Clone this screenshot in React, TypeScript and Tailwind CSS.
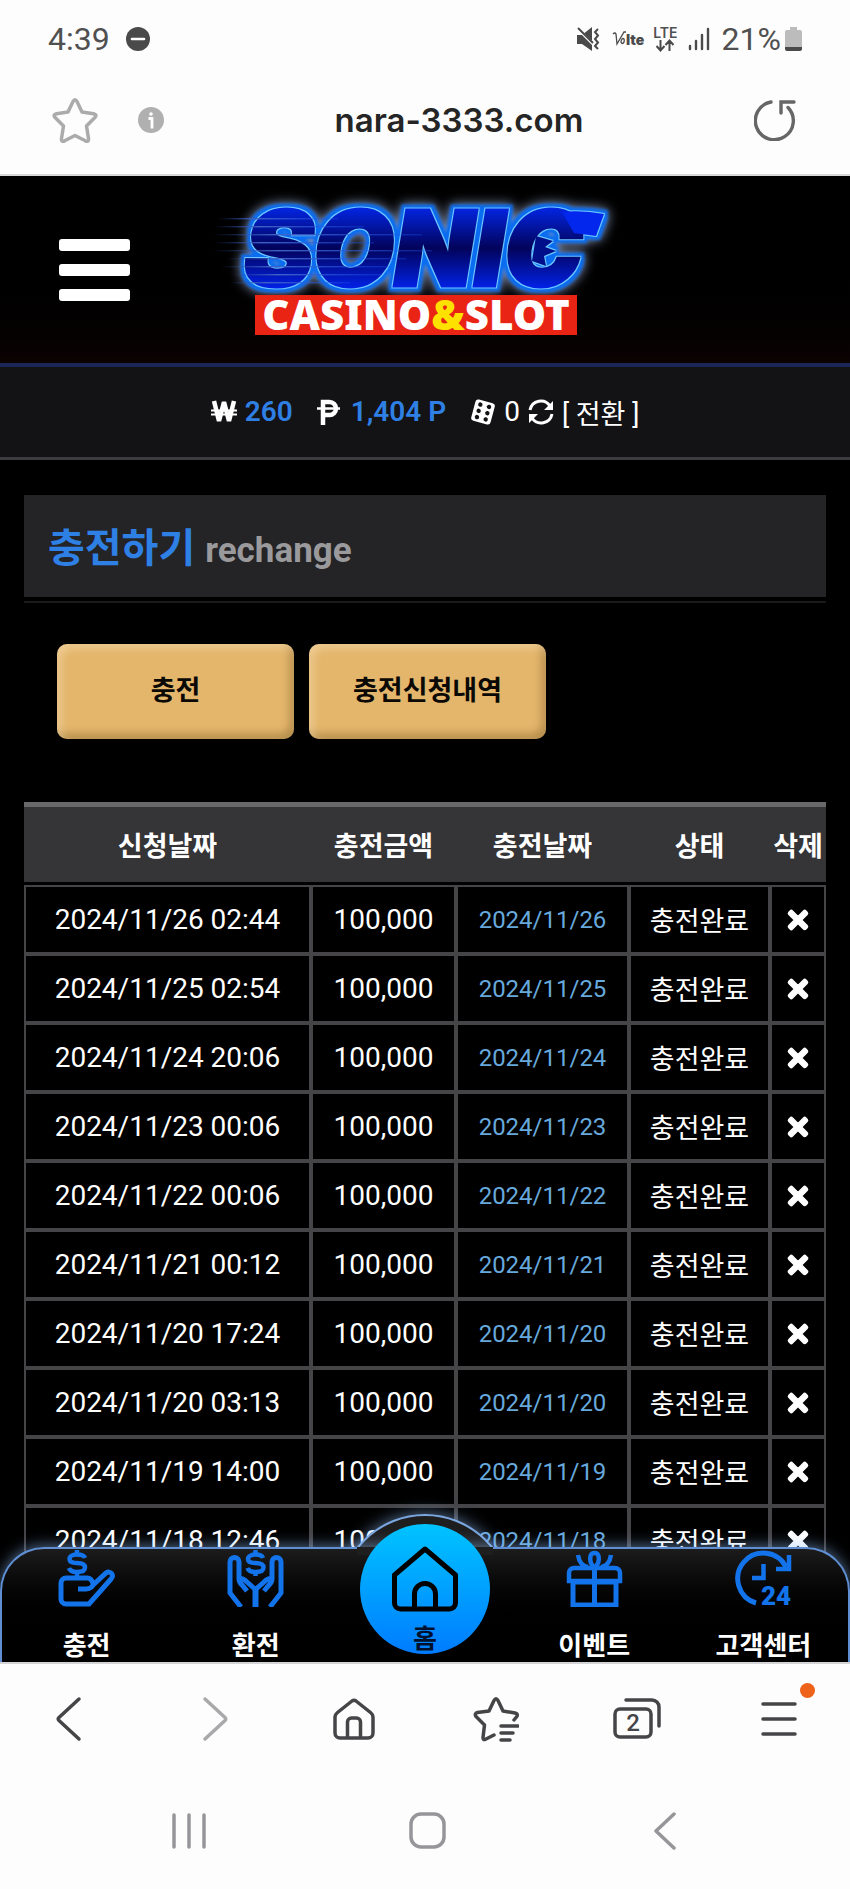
import type { ReactNode } from 'react';
import { FaTimes } from 'react-icons/fa';

interface Deposit {
  requestedAt: string;
  amount: string;
  paidOn: string;
}

const DEPOSITS: Deposit[] = [
  { requestedAt: '2024/11/26 02:44', amount: '100,000', paidOn: '2024/11/26' },
  { requestedAt: '2024/11/25 02:54', amount: '100,000', paidOn: '2024/11/25' },
  { requestedAt: '2024/11/24 20:06', amount: '100,000', paidOn: '2024/11/24' },
  { requestedAt: '2024/11/23 00:06', amount: '100,000', paidOn: '2024/11/23' },
  { requestedAt: '2024/11/22 00:06', amount: '100,000', paidOn: '2024/11/22' },
  { requestedAt: '2024/11/21 00:12', amount: '100,000', paidOn: '2024/11/21' },
  { requestedAt: '2024/11/20 17:24', amount: '100,000', paidOn: '2024/11/20' },
  { requestedAt: '2024/11/20 03:13', amount: '100,000', paidOn: '2024/11/20' },
  { requestedAt: '2024/11/19 14:00', amount: '100,000', paidOn: '2024/11/19' },
  { requestedAt: '2024/11/18 12:46', amount: '100,000', paidOn: '2024/11/18' },
];

const COLUMNS = [
  { label: '신청날짜', width: 'w-[287px]' },
  { label: '충전금액', width: 'w-[145px]' },
  { label: '충전날짜', width: 'w-[173px]' },
  { label: '상태', width: 'w-[141px]' },
  { label: '삭제', width: 'w-[56px]' },
];

function StatusBar() {
  return (
    <div className="flex h-[78px] shrink-0 items-center justify-between px-12 text-[32px] leading-none text-[#505050]">
      <div className="flex items-center gap-4">
        <span>4:39</span>
        <svg width="24" height="24" viewBox="0 0 24 24" aria-hidden="true">
          <circle cx="12" cy="12" r="12" fill="#4a4a4a" />
          <path d="M6 12h12" stroke="#fff" strokeWidth="2.6" strokeLinecap="round" />
        </svg>
      </div>
      <div className="flex items-center">
        <svg width="24" height="24" viewBox="0 0 24 24" className="mr-3" aria-hidden="true">
          <path d="M1 8h5l10-8v24L6 17H1z" fill="#4a4a4a" />
          <path d="M-1 -1l20 20" stroke="#fff" strokeWidth="3" />
          <path d="M2 1l15 15" stroke="#4a4a4a" strokeWidth="2" />
          <path d="M22 2l-3 3 3 3.500-3 3.500 3 3.500-3 3.500 3 3" fill="none" stroke="#4a4a4a" strokeWidth="2" />
        </svg>
        <svg width="33" height="18" viewBox="0 0 33 18" className="mr-2" fill="#4a4a4a" aria-hidden="true">
          <path d="M1 4q2-2 3 0l1 10L12 2h2M10 9q-2 3 0 4.500 3-.500 2-4.500-1-1-2 0z" fill="none" stroke="#4a4a4a" strokeWidth="1.300" />
          <text x="14" y="15" fontFamily="Inter, sans-serif" fontWeight="900" fontSize="14">lte</text>
        </svg>
        <div className="mr-[10px] flex flex-col items-center">
          <span className="font-[Inter,sans-serif] text-[14px] leading-[13px] font-semibold">LTE</span>
          <svg width="18" height="13" viewBox="0 0 18 13" fill="none" stroke="#4a4a4a" strokeWidth="2" aria-hidden="true">
            <path d="M4.500 1v10M.5 7l4 4.500L8.500 7M13.500 12V2M9.500 6l4-4.500L17.500 6" />
          </svg>
        </div>
        <svg width="22" height="24" viewBox="0 0 22 24" className="mr-3" fill="none" stroke="#4a4a4a" strokeWidth="2.400" strokeLinecap="round" aria-hidden="true">
          <path d="M2 19v3M8 14v8M14 8v14M20 2v20" />
        </svg>
        <span>21%</span>
        <svg width="17" height="24" viewBox="0 0 17 24" className="ml-1" aria-hidden="true">
          <path d="M5 0h7v3h3a2 2 0 0 1 2 2v16H0V5a2 2 0 0 1 2-2h3z" fill="#bcbcbc" />
          <path d="M0 20h17v2a2 2 0 0 1-2 2H2a2 2 0 0 1-2-2z" fill="#4a4a4a" />
        </svg>
      </div>
    </div>
  );
}

function AddressBar() {
  return (
    <div className="flex h-[98px] shrink-0 items-center border-b-2 border-[#d8dad9] pb-3 pl-[52px] pr-[54px]">
      <button type="button" aria-label="Add bookmark">
        <svg width="46" height="46" viewBox="0 0 46 46" fill="none" stroke="#ababab" strokeWidth="3.500" strokeLinejoin="round" aria-hidden="true">
          <path d="M21 4.500q2-3.500 4 0l5 10.500 11.500 1.700q4 .8 1.400 3.800L34.500 29l2 12.500q.4 4-3.200 2.300L23 38.500l-10.300 5.300q-3.600 1.700-3.200-2.300l2-12.500-8.400-8.500q-2.600-3 1.400-3.800L16 15z" />
        </svg>
      </button>
      <svg width="26" height="26" viewBox="0 0 26 26" className="ml-[40px]" aria-hidden="true">
        <circle cx="13" cy="13" r="13" fill="#b0b0b0" />
        <circle cx="13" cy="7" r="1.800" fill="#fff" />
        <path d="M10.500 11.500H14v10" fill="none" stroke="#fff" strokeWidth="2.800" />
      </svg>
      <span className="flex-1 text-center font-[Inter,sans-serif] text-[33px] leading-none font-semibold text-[#252525]">
        nara-3333.com
      </span>
      <button type="button" aria-label="Reload">
        <svg width="42" height="42" viewBox="0 0 42 42" fill="none" stroke="#666" strokeWidth="3.400" strokeLinecap="round" aria-hidden="true">
          <path d="M17 3A19 19 0 1 0 34 8.500" />
          <path d="M27 14V3h13" />
        </svg>
      </button>
    </div>
  );
}

function Logo() {
  return (
    <svg width="430" height="187" viewBox="0 0 430 187" role="img" aria-label="Sonic Casino & Slot">
      <defs>
        <linearGradient id="sonicFill" x1="0" y1="0" x2="0" y2="1">
          <stop offset=".15" stopColor="#0328f0" />
          <stop offset=".5" stopColor="#02035a" />
          <stop offset=".85" stopColor="#0224f4" />
        </linearGradient>
        <linearGradient id="speed" x1="0" y1="0" x2="1" y2="0">
          <stop offset="0" stopColor="#27479c" stopOpacity="0" />
          <stop offset=".3" stopColor="#3f62c4" />
          <stop offset="1" stopColor="#1d55f0" stopOpacity=".3" />
        </linearGradient>
        {/* light outline, solid blue halo, then a soft pale glow */}
        <filter id="neon" x="-10%" y="-30%" width="120%" height="160%" colorInterpolationFilters="sRGB">
          <feMorphology in="SourceAlpha" operator="dilate" radius="1" result="edge" />
          <feFlood floodColor="#6cc8ff" />
          <feComposite in2="edge" operator="in" result="outline" />
          <feMorphology in="SourceAlpha" operator="dilate" radius="4" />
          <feGaussianBlur stdDeviation="1.5" result="wide" />
          <feFlood floodColor="#0a6cf0" />
          <feComposite in2="wide" operator="in" result="halo" />
          <feGaussianBlur in="wide" stdDeviation="6" result="soft" />
          <feFlood floodColor="#8f9fc4" />
          <feComposite in2="soft" operator="in" result="glow" />
          <feMerge>
            <feMergeNode in="glow" />
            <feMergeNode in="halo" />
            <feMergeNode in="outline" />
            <feMergeNode in="SourceGraphic" />
          </feMerge>
        </filter>
      </defs>
      <g filter="url(#neon)">
        <text
          x="34"
          y="110"
          fontFamily="Inter, sans-serif"
          fontWeight="900"
          fontStyle="italic"
          fontSize="104"
          fill="url(#sonicFill)"
          stroke="url(#sonicFill)"
          strokeWidth="3"
        >
          SONIC
        </text>
        {/* quills */}
        <path d="M326 60l17 5-8 6 11 4-12 5 2 10-14-5z" fill="#020f8a" />
        <path d="M352 36q20-2 42 2l-8 22-22-3z" fill="#0327ec" />
      </g>
      <g fill="url(#speed)">
        <rect x="8" y="42" width="120" height="1.400" />
        <rect x="4" y="50" width="150" height="1.400" />
        <rect x="2" y="58" width="210" height="1.400" />
        <rect x="4" y="66" width="160" height="1.400" />
        <rect x="2" y="74" width="220" height="1.400" />
        <rect x="16" y="82" width="180" height="1.400" />
        <rect x="10" y="90" width="170" height="1.400" />
        <rect x="22" y="98" width="150" height="1.400" />
        <rect x="20" y="106" width="120" height="1.400" />
      </g>
      <rect x="45" y="119" width="322" height="40" fill="#ea2415" />
      <text x="206" y="154" textAnchor="middle" fontFamily="Noto Sans, sans-serif" fontWeight="900" fontSize="42" fill="#fff">
        CASINO<tspan fill="#ffe100">&amp;</tspan>SLOT
      </text>
    </svg>
  );
}

function SiteHeader() {
  return (
    <header className="grid grid-cols-[1fr_auto_1fr] items-center border-b-4 border-[#1a2558] bg-linear-to-b from-black from-40% to-[#0c0202]">
      <button type="button" aria-label="메뉴" className="ml-[59px] flex w-[71px] flex-col gap-[13px]">
        <span className="h-3 w-full rounded-[3px] bg-white" />
        <span className="h-3 w-full rounded-[3px] bg-white" />
        <span className="h-3 w-full rounded-[3px] bg-white" />
      </button>
      <Logo />
    </header>
  );
}

function BalanceBar() {
  return (
    <div className="flex h-[93px] items-center justify-center border-b-[3px] border-[#3c3b3d] bg-[#131215] text-[28px] leading-none text-white">
      <svg width="26" height="24" viewBox="0 0 26 24" className="mr-2" fill="none" stroke="#fff" role="img" aria-label="원">
        <path d="M3 1l5 20 5-19 5 19 5-20" strokeWidth="4.500" strokeLinejoin="bevel" />
        <path d="M0 10.500h26M0 14.500h26" strokeWidth="2" />
      </svg>
      <span className="mr-6 font-semibold text-[#2f80e4]">260</span>
      <svg width="24" height="26" viewBox="0 0 24 26" className="mr-[10px]" fill="none" stroke="#fff" aria-hidden="true">
        <path d="M6 26V3h6.500a6.500 6.500 0 0 1 0 13H6" strokeWidth="4.500" />
        <path d="M0 9.500h23" strokeWidth="2.500" />
      </svg>
      <span className="mr-6 font-semibold text-[#2f80e4]">1,404 P</span>
      <svg width="26" height="26" viewBox="0 0 26 26" className="mr-2" aria-hidden="true">
        <g transform="rotate(15 13 13)">
          <rect x="3" y="2" width="20" height="22" rx="3" fill="#fff" />
          <g fill="#131215">
            <circle cx="8.500" cy="6.500" r="2.200" />
            <circle cx="17.500" cy="6.500" r="2.200" />
            <circle cx="8.500" cy="13" r="2.200" />
            <circle cx="17.500" cy="13" r="2.200" />
            <circle cx="8.500" cy="19.500" r="2.200" />
            <circle cx="17.500" cy="19.500" r="2.200" />
          </g>
        </g>
      </svg>
      <span className="mr-2">0</span>
      <a href="#convert" className="flex items-center gap-2">
        <svg width="26" height="26" viewBox="0 0 26 26" fill="none" stroke="#fff" strokeWidth="3" aria-hidden="true">
          <path d="M2 11A11 11 0 0 1 22 7M24 15A11 11 0 0 1 4 19" />
          <path d="M25 2v9h-9zM1 24v-9h9z" fill="#fff" stroke="none" />
        </svg>
        <span className="pt-[6px] text-[27px]">[ 전환 ]</span>
      </a>
    </div>
  );
}

function PageTitle() {
  return (
    <div className="border-b-2 border-[#1b1b1c] pb-1">
      <h1 className="flex h-[102px] items-baseline gap-[10px] bg-[#242325] px-6 pt-[30px] font-bold">
        <span className="text-[40px] leading-[48px] text-[#2f80e4]">충전하기</span>
        <span className="text-[35px] leading-[48px] text-[#9a999c]">rechange</span>
      </h1>
    </div>
  );
}

function GoldButton({ children }: { children: ReactNode }) {
  return (
    <button
      type="button"
      className="h-[95px] w-[237px] rounded-[10px] bg-[#e4b66c] text-[27px] font-bold text-[#0b0905] shadow-[inset_4px_4px_8px_rgba(255,235,200,0.45),inset_-4px_-5px_8px_rgba(90,60,10,0.35)]"
    >
      {children}
    </button>
  );
}

function DepositTable() {
  return (
    <table className="w-full table-fixed border-separate border-spacing-0 text-center text-white">
      <thead>
        <tr className="h-20">
          {COLUMNS.map((column) => (
            <th
              key={column.label}
              className={`${column.width} border-t-[5px] border-[#68676a] bg-[#353436] pt-[6px] text-[27px] leading-none font-bold whitespace-nowrap`}
            >
              {column.label}
            </th>
          ))}
        </tr>
        <tr aria-hidden="true" className="h-[3px]" />
      </thead>
      <tbody className="[&_td]:border-2 [&_td]:border-[#454447]">
        {DEPOSITS.map((deposit) => (
          <tr key={deposit.requestedAt} className="h-[69px] leading-none">
            <td className="text-[28px]">{deposit.requestedAt}</td>
            <td className="text-[28px]">{deposit.amount}</td>
            <td className="text-[24px] text-[#67a9dc]">{deposit.paidOn}</td>
            <td className="pt-[6px] text-[27px]">충전완료</td>
            <td>
              <button type="button" aria-label="삭제" className="block w-full">
                <FaTimes className="mx-auto size-7" stroke="currentColor" strokeWidth="24" />
              </button>
            </td>
          </tr>
        ))}
      </tbody>
    </table>
  );
}

function NavItem({ label, children }: { label: string; children: ReactNode }) {
  return (
    <a href="#" className="flex flex-col items-center gap-[25px] pt-px">
      <svg width="57" height="57" viewBox="0 0 57 57" fill="none" stroke="#1273ea" strokeWidth="5" aria-hidden="true">
        {children}
      </svg>
      <span className="text-[26px] leading-[28px] font-bold whitespace-nowrap text-white">{label}</span>
    </a>
  );
}

function SiteNav() {
  return (
    <nav className="absolute inset-x-0 bottom-0">
      {/* hump behind the home button */}
      <div className="absolute -top-[33px] left-1/2 size-[173px] -translate-x-1/2 rounded-full border-2 border-[#7aa7e0] bg-[#1e1e1f] shadow-[0_0_16px_rgba(150,195,255,0.6)]" />
      <div className="relative grid h-[115px] grid-cols-5 rounded-t-[44px] border-2 border-b-0 border-[#5f8fd2] bg-linear-to-b from-[#1c1c1d] to-black to-75% shadow-[0_-2px_14px_rgba(150,195,255,0.5)]">
        <NavItem label="충전">
          <path d="M20 39h8c5 0 7-3 7-5s-2-6-6-6H8a5 5 0 0 0-5 5v16a5 5 0 0 0 5 5h23L53 29c4-4-1-9-5-6L34 36" />
          <path d="M27 8c-1-3-4-3.500-8-3.500S11.500 6 11.500 9s3 4 7.500 4 8 1 8 4.500-4 4.500-8 4.500-7-1-8-4M19 0v4M19 22v6" strokeWidth="4.500" />
        </NavItem>
        <NavItem label="환전">
          <path d="M14 57L3 43V12a4.500 4.500 0 0 1 9 0v17c0 3 1 4 3 6l5 6M12 30c3-3 6 0 8 2l9 8v17" />
          <path d="M43 57L54 43V12a4.500 4.500 0 0 0-9 0v17c0 3-1 4-3 6l-5 6M45 30c-3-3-6 0-8 2l-9 8v17" />
          <path d="M36 8c-1-3-4-3.500-7.500-3.500S21 6 21 9s3 4 7.500 4 8 1 8 4.500-4 4.500-8 4.500-7-1-8-4M28.500 0v4M28.500 22v4" strokeWidth="4.500" />
        </NavItem>
        <a href="#" aria-label="홈" className="relative flex justify-center">
          <div className="absolute -top-[2px] left-1/2 h-2 w-[136px] -translate-x-1/2 bg-[#1e1e1f]" />
          <div className="absolute -top-[25px] flex size-[130px] flex-col items-center gap-[13px] rounded-full bg-linear-to-b from-[#00c3ff] to-[#007bff] pt-[22px]">
            <svg width="66" height="66" viewBox="0 0 66 66" fill="none" stroke="#000" strokeWidth="5" strokeLinejoin="round" aria-hidden="true">
              <path d="M33 3L2.500 29v28a6 6 0 0 0 6 6h49a6 6 0 0 0 6-6V29z" />
              <path d="M22.500 63V48a10.500 10.500 0 0 1 21 0v15" />
            </svg>
            <span className="text-[26px] leading-[28px] font-bold text-[#00112e]">홈</span>
          </div>
        </a>
        <NavItem label="이벤트">
          <path d="M7 32h43v23H7zM28.500 19v36" />
          <path d="M3 31V23a5 5 0 0 1 5-5h41a5 5 0 0 1 5 5v8zM28.500 18c-4-4-5-8-4-12s7-4 8 0 0 8-4 12M12 5c1 7 4 11 10 12M45 5c-1 7-4 11-10 12" strokeWidth="4.500" />
        </NavItem>
        <NavItem label="고객센터">
          <path d="M21 53A25.500 25.500 0 1 1 51 17" />
          <path d="M54 5v14H41M28.500 14v14H17" strokeWidth="4.500" />
          <text x="26" y="55" fontFamily="Roboto, sans-serif" fontWeight="900" fontSize="26" fill="#1273ea" stroke="none">24</text>
        </NavItem>
      </div>
    </nav>
  );
}

function ToolButton({ label, children }: { label: string; children: ReactNode }) {
  return (
    <button type="button" aria-label={label} className="flex items-center justify-center">
      {children}
    </button>
  );
}

function BrowserToolbar() {
  return (
    <div className="grid h-[112px] shrink-0 grid-cols-6 border-t-2 border-[#d4d4d6] text-[#454447]">
      <ToolButton label="Back">
        <svg width="48" height="46" viewBox="0 0 48 46" fill="none" stroke="currentColor" strokeWidth="3.500" strokeLinecap="round" aria-hidden="true">
          <path d="M32 3L12 21.500q-1.500 1.500 0 3L32 43" />
        </svg>
      </ToolButton>
      <ToolButton label="Forward">
        <svg width="48" height="46" viewBox="0 0 48 46" fill="none" stroke="#a9a9ac" strokeWidth="3.500" strokeLinecap="round" aria-hidden="true">
          <path d="M17 3l20 18.500q1.500 1.500 0 3L17 43" />
        </svg>
      </ToolButton>
      <ToolButton label="Home">
        <svg width="42" height="42" viewBox="0 0 42 42" fill="none" stroke="currentColor" strokeWidth="3.500" strokeLinejoin="round" aria-hidden="true">
          <path d="M19 3q2-1.500 4 0l14.500 11.500Q40 16.500 40 19v16a5 5 0 0 1-5 5H7a5 5 0 0 1-5-5V19q0-2.500 2.500-4.500z" />
          <path d="M14.500 40V24a4 4 0 0 1 4-4h5a4 4 0 0 1 4 4v16" />
        </svg>
      </ToolButton>
      <ToolButton label="Bookmarks">
        <svg width="46" height="46" viewBox="0 0 46 46" fill="none" stroke="currentColor" strokeWidth="3.500" strokeLinecap="round" strokeLinejoin="round" aria-hidden="true">
          <path d="M21 39l-9 4.500q-2 .5-2-2L11.500 29 3 20.500q-2-3 1.500-4L16 15l5-10.500q2-3.500 4 0L30 15l12 2q4 1 1.400 4L41 24" />
          <path d="M28 30h17M28 37h12M28 44h9" />
        </svg>
      </ToolButton>
      <ToolButton label="Tabs">
        <svg width="48" height="42" viewBox="0 0 48 42" fill="none" stroke="currentColor" strokeWidth="3.500" strokeLinecap="round" aria-hidden="true">
          <rect x="2" y="11" width="36" height="28" rx="5" />
          <path d="M13 2h26a7 7 0 0 1 7 7v19" />
          <text x="20" y="33" textAnchor="middle" fontFamily="Roboto, sans-serif" fontWeight="500" fontSize="24" fill="currentColor" stroke="none">2</text>
        </svg>
      </ToolButton>
      <ToolButton label="Menu">
        <span className="relative">
          <svg width="36" height="36" viewBox="0 0 36 36" fill="none" stroke="currentColor" strokeWidth="3.500" strokeLinecap="round" aria-hidden="true">
            <path d="M2 3h32M2 18h32M2 33h32" />
          </svg>
          <span className="absolute -top-[18px] -right-[18px] size-[15px] rounded-full bg-[#ee621a]" />
        </span>
      </ToolButton>
    </div>
  );
}

function SystemNav() {
  return (
    <div className="grid h-[115px] shrink-0 grid-cols-3 pr-[66px] pb-[2px] pl-[70px] text-[#969599]">
      <ToolButton label="Recent apps">
        <svg width="36" height="36" viewBox="0 0 36 36" stroke="currentColor" strokeWidth="3.500" strokeLinecap="round" aria-hidden="true">
          <path d="M3 2v32M18 2v32M33 2v32" />
        </svg>
      </ToolButton>
      <ToolButton label="Home screen">
        <svg width="37" height="37" viewBox="0 0 37 37" fill="none" stroke="currentColor" strokeWidth="3.500" aria-hidden="true">
          <rect x="2" y="2" width="33" height="33" rx="10" />
        </svg>
      </ToolButton>
      <ToolButton label="Go back">
        <svg width="24" height="38" viewBox="0 0 24 38" fill="none" stroke="currentColor" strokeWidth="3.500" strokeLinecap="round" strokeLinejoin="round" aria-hidden="true">
          <path d="M21 2L3 19l18 17" />
        </svg>
      </ToolButton>
    </div>
  );
}

export default function App() {
  return (
    <div className="flex h-screen flex-col bg-[#fdfdfd] font-[Roboto,'Noto_Sans_CJK_KR',sans-serif]">
      <StatusBar />
      <AddressBar />
      <div className="relative min-h-0 flex-1 overflow-hidden bg-black">
        <SiteHeader />
        <BalanceBar />
        <main className="px-6 pt-[35px]">
          <PageTitle />
          <div className="flex gap-[15px] pt-[41px] pb-[63px] pl-[33px]">
            <GoldButton>충전</GoldButton>
            <GoldButton>충전신청내역</GoldButton>
          </div>
          <DepositTable />
        </main>
        <SiteNav />
      </div>
      <BrowserToolbar />
      <SystemNav />
    </div>
  );
}
